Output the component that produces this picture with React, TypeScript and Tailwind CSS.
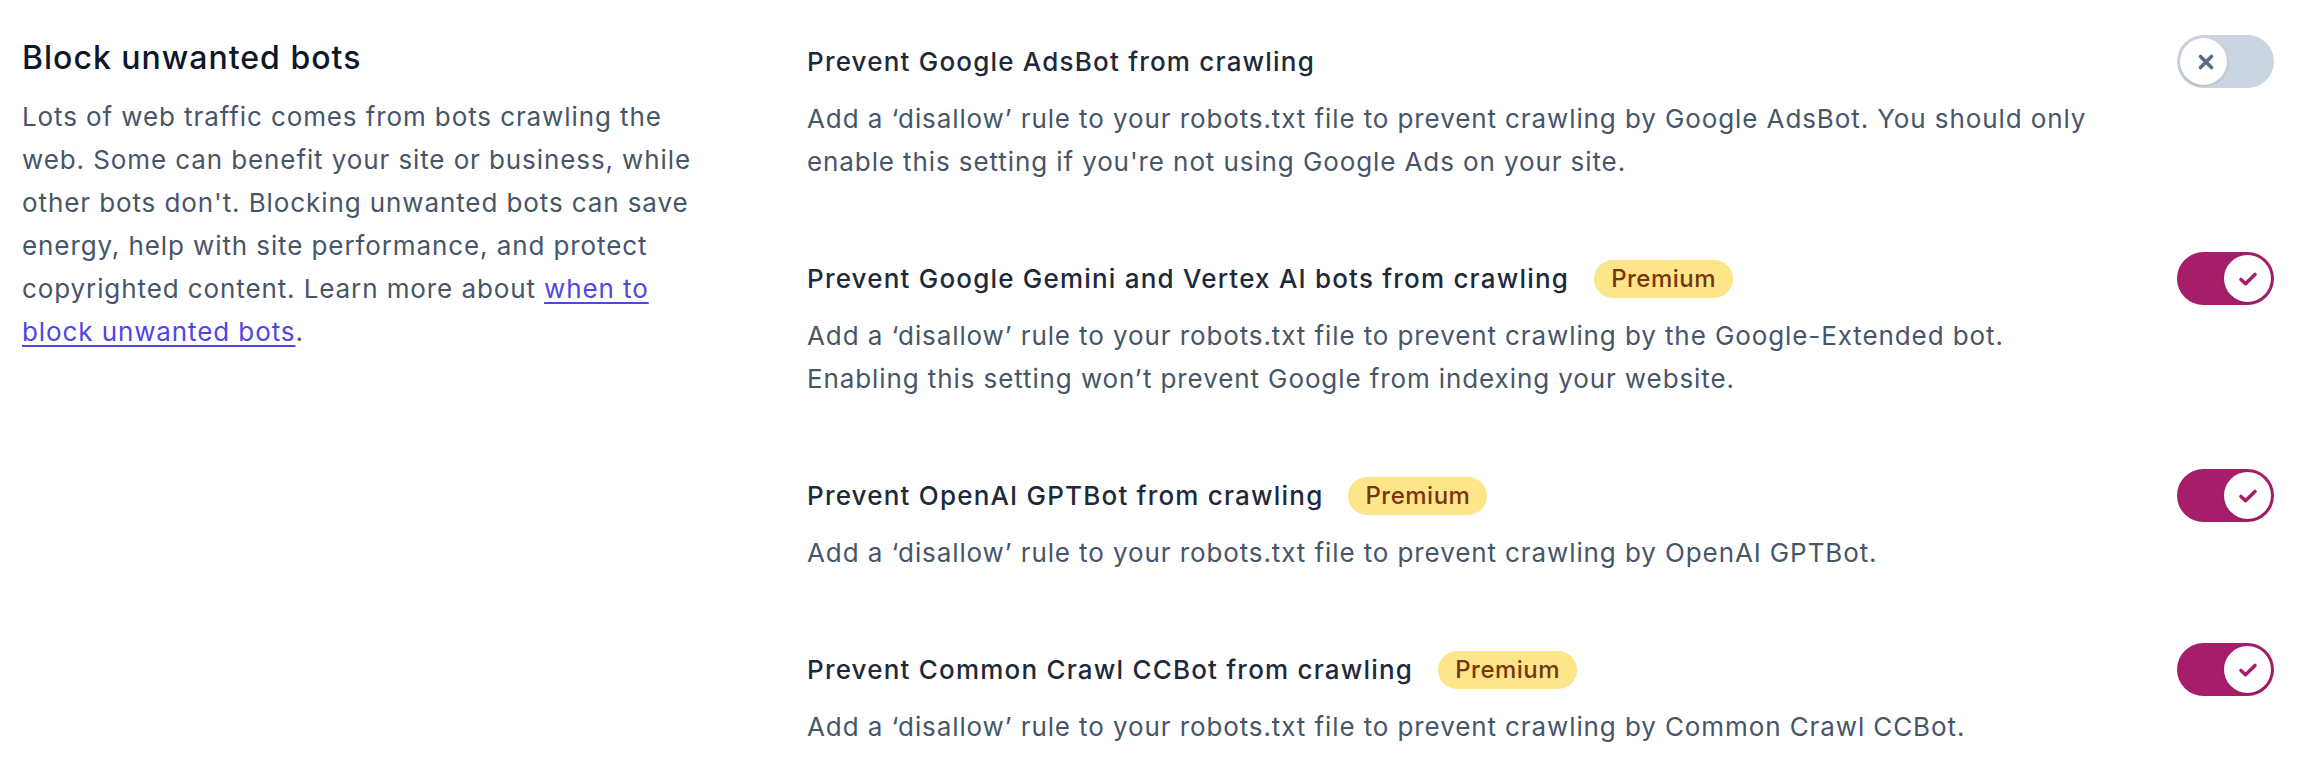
import React, { useState } from 'react';

type Setting = {
  id: string;
  title: string;
  description: React.ReactNode;
  premium?: boolean;
  enabled: boolean;
};

const SETTINGS: Setting[] = [
  {
    id: 'adsbot',
    title: 'Prevent Google AdsBot from crawling',
    description:
      "Add a ‘disallow’ rule to your robots.txt file to prevent crawling by Google AdsBot. You should only enable this setting if you're not using Google Ads on your site.",
    enabled: false,
  },
  {
    id: 'google-extended',
    title: 'Prevent Google Gemini and Vertex AI bots from crawling',
    description: (
      <>
        Add a ‘disallow’ rule to your robots.txt file to prevent crawling by the Google-Extended bot.
        <br />
        Enabling this setting won’t prevent Google from indexing your website.
      </>
    ),
    premium: true,
    enabled: true,
  },
  {
    id: 'gptbot',
    title: 'Prevent OpenAI GPTBot from crawling',
    description: 'Add a ‘disallow’ rule to your robots.txt file to prevent crawling by OpenAI GPTBot.',
    premium: true,
    enabled: true,
  },
  {
    id: 'ccbot',
    title: 'Prevent Common Crawl CCBot from crawling',
    description: 'Add a ‘disallow’ rule to your robots.txt file to prevent crawling by Common Crawl CCBot.',
    premium: true,
    enabled: true,
  },
];

const Toggle = ({ checked, onChange }: { checked: boolean; onChange: () => void }) => (
  <button
    type="button"
    role="switch"
    aria-checked={checked}
    onClick={onChange}
    className={`relative flex h-[53px] w-[97px] shrink-0 items-center rounded-full p-[3px] transition-colors ${
      checked ? 'bg-[#a61e69]' : 'bg-[#cbd5e1]'
    }`}
  >
    <span
      className={`flex h-[47px] w-[47px] items-center justify-center rounded-full bg-white shadow-[0_1px_3px_rgba(0,0,0,0.18)] transition-transform ${
        checked ? 'translate-x-[44px]' : 'translate-x-0'
      }`}
    >
      {checked ? (
        <svg width="20" height="16" viewBox="0 0 20 16" fill="none">
          <path d="M3 8.5l4.5 4.2L17 3.5" stroke="#a61e69" strokeWidth="3.6" strokeLinecap="round" strokeLinejoin="round" />
        </svg>
      ) : (
        <svg width="18" height="18" viewBox="0 0 18 18" fill="none" className="ml-[4px]">
          <path d="M3.5 3.5l11 11M14.5 3.5l-11 11" stroke="#5b6b80" strokeWidth="3.6" strokeLinecap="round" />
        </svg>
      )}
    </span>
  </button>
);

export default function App() {
  const [values, setValues] = useState<Record<string, boolean>>(
    Object.fromEntries(SETTINGS.map((s) => [s.id, s.enabled]))
  );

  const toggle = (id: string) => setValues((prev) => ({ ...prev, [id]: !prev[id] }));

  return (
    <div
      className="min-h-screen bg-white pt-[40px]"
      style={{ fontFamily: 'Inter, "Noto Sans", sans-serif' }}
    >
      <div className="flex pl-[22px] pr-[24px]">
        {/* Section intro */}
        <div className="w-[700px] shrink-0">
          <h3 className="text-[32px] font-medium leading-[36px] tracking-[1px] text-[#0f172a]">
            Block unwanted bots
          </h3>
          <p className="mt-[19px] text-[26px] leading-[43px] tracking-[0.9px] text-[#475569]">
            Lots of web traffic comes from bots crawling the web. Some can benefit your site or business, while
            other bots don't. Blocking unwanted bots can save energy, help with site performance, and protect
            copyrighted content. Learn more about{' '}
            <a href="#" className="text-[#4f46e5] underline underline-offset-[4px]">
              when to block unwanted bots
            </a>
            .
          </p>
        </div>

        {/* Settings */}
        <div className="ml-[85px] flex flex-1 flex-col gap-[74px]">
          {SETTINGS.map((s) => (
            <div key={s.id} className="flex items-start gap-[40px]">
              <div className="flex-1">
                <div className="flex items-center gap-[25px]">
                  <span className="text-[26px] font-medium leading-[43px] tracking-[1.2px] text-[#1e293b]">
                    {s.title}
                  </span>
                  {s.premium && (
                    <span className="rounded-full bg-[#fde68a] px-[17px] text-[24px] font-medium leading-[38px] tracking-[0.5px] text-[#78350f]">
                      Premium
                    </span>
                  )}
                </div>
                <p className="mt-[14px] text-[26px] leading-[43px] tracking-[0.9px] text-[#475569]">
                  {s.description}
                </p>
              </div>
              <div className="flex h-[43px] items-center">
                <Toggle checked={values[s.id]} onChange={() => toggle(s.id)} />
              </div>
            </div>
          ))}
        </div>
      </div>
    </div>
  );
}
